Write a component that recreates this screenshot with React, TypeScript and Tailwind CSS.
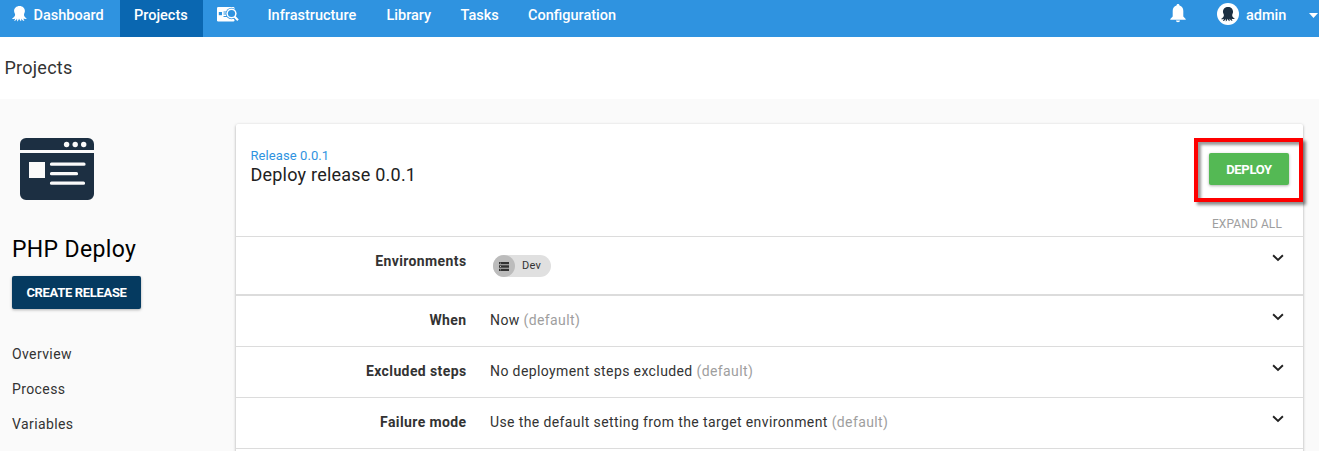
import { ReactNode } from "react";

function Octopus({ className }: { className: string }) {
  return (
    <svg viewBox="0 0 15 16" preserveAspectRatio="none" className={className} fill="currentColor">
      <path d="M7.600 0C4.300 0 2.100 2.200 2.100 5.100c0 1.600.9 2.400 1 3.600.1 1.300-1.300 2.900-3.100 4 .8.400 2.200.3 3.200-.3-.2 1-.7 1.900-1.200 2.600 1.300-.2 2.500-1.200 3-2.600.2 1 .2 2 .1 3 .9-.6 1.700-1.700 1.900-3 .5 1 1 2 2 2.900.4-.8.3-1.900.1-2.900.9 1.300 1.900 2.300 3.300 2.500-.5-.8-.8-1.500-.9-2.400 1 .5 2.300.6 3.400 0-1.900-1-3-2.600-2.900-3.800.1-1.100.9-2 .9-3.600C12.900 2.200 10.700 0 7.600 0Z" />
    </svg>
  );
}

function SearchCard() {
  return (
    <svg viewBox="0 0 22 16" className="h-4 w-[22px] shrink-0">
      <rect x="0" y="1" width="17.500" height="14.500" rx="1.200" fill="#fff" />
      <rect x="1.800" y="6" width="3.200" height="3.200" fill="#2f93e0" />
      <path d="M6.500 6h4M6.500 8h3M6.500 10.500h4" stroke="#2f93e0" strokeWidth="1" />
      <circle cx="14.500" cy="7.500" r="5.800" fill="#2f93e0" />
      <path d="m17.300 10.500 3.500 3.800" stroke="#2f93e0" strokeWidth="4" />
      <circle cx="14.500" cy="7.500" r="5.100" fill="#fff" />
      <circle cx="14.500" cy="7.500" r="3.600" fill="#2f93e0" />
      <path d="m17.500 10.500 3.500 3.800" stroke="#fff" strokeWidth="2" />
    </svg>
  );
}

function Chevron() {
  return (
    <svg viewBox="0 0 12 8" className="h-2 w-3" fill="none" stroke="#212121" strokeWidth="1.900">
      <path d="M1.100 1.200 6 5.900l4.900-4.700" />
    </svg>
  );
}

function ProjectLogo() {
  return (
    <svg viewBox="0 0 74 62" className="ml-2 h-[62px] w-[74px]">
      <path d="M6 0h62a6 6 0 0 1 6 6v6H0V6a6 6 0 0 1 6-6ZM0 15h74v41a6 6 0 0 1-6 6H6a6 6 0 0 1-6-6Z" fill="#1c2f42" />
      <g fill="#fafafa">
        <circle cx="46.600" cy="6.500" r="2.700" />
        <circle cx="55.200" cy="6.500" r="2.700" />
        <circle cx="63.700" cy="6.500" r="2.700" />
        <rect x="9" y="24" width="16" height="16" />
      </g>
      <path d="M31.500 26.200h32.500M31.500 35.700h25M31.500 45.200h32" stroke="#fafafa" strokeWidth="3.200" strokeLinecap="round" />
    </svg>
  );
}

function Row({ label, height, children }: { label: string; height: string; children: ReactNode }) {
  return (
    <div className={`flex shrink-0 border-b border-[#dcdcdc] ${height}`}>
      <div className="w-[230.500px] pt-[14px] text-right text-[14px] leading-5 font-bold tracking-[0.39px] text-[#333]">
        {label}
      </div>
      <div className="ml-[23.500px] flex-1 pt-[14px] text-[14px] leading-5 tracking-[0.39px] text-[#333]">{children}</div>
      <div className="pt-[17px] pr-[19px]">
        <Chevron />
      </div>
    </div>
  );
}

const Default = () => <span className="text-[#9e9e9e]">(default)</span>;

export default function App() {
  return (
    <div className="flex h-[451px] w-[1319px] flex-col overflow-hidden bg-[#fafafa] font-['Roboto',sans-serif] whitespace-nowrap">
      <nav className="flex h-[37px] shrink-0 bg-[#2f93e0] text-[14.500px] leading-[31px] font-medium text-white">
        <div className="flex w-[120px] pl-[11.500px]">
          <Octopus className="mt-[6px] mr-[7px] h-4 w-[15px] shrink-0" />
          Dashboard
        </div>
        <div className="w-[83px] bg-[#0a67b1] pl-[14px]">Projects</div>
        <div className="w-[64px] pt-[6px] pl-[14px]">
          <SearchCard />
        </div>
        <div className="w-[119px] pl-[0.500px]">Infrastructure</div>
        <div className="w-[74px] pl-[0.500px]">Library</div>
        <div className="w-[68px] pl-[0.500px]">Tasks</div>
        <div className="flex-1">Configuration</div>
        <svg viewBox="0 0 16 19" className="mt-1 mr-[31px] h-[19px] w-4" fill="#fff">
          <path d="M8 0c1 0 1.500.6 1.500 1.600C12 2.300 13.300 4.400 13.300 7v5.500L15.700 15v.8H.3V15l2.400-2.500V7c0-2.600 1.300-4.700 3.800-5.400C6.500.6 7 0 8 0ZM6 16.500h4c0 1-.8 1.700-2 1.700s-2-.7-2-1.700Z" />
        </svg>
        <div className="mt-[3px] mr-[7px] flex size-[22px] items-center justify-center rounded-full bg-white text-[#1c2f42]">
          <Octopus className="h-[15px] w-[14px]" />
        </div>
        <div className="w-[63px]">admin</div>
        <svg viewBox="0 0 9 5" className="mt-[13px] h-[5px] w-[9px] shrink-0" fill="#fff">
          <path d="M0 0h9L4.500 5Z" />
        </svg>
        <div className="w-[1px]" />
      </nav>
      <header className="h-[62px] shrink-0 bg-white pt-[19px] pl-[4.500px] text-[18px] leading-6 tracking-[0.25px] text-[#333]">
        Projects
      </header>
      <div className="flex min-h-0 flex-1">
        <aside className="w-[236px] shrink-0 pt-[39px] pl-3">
          <ProjectLogo />
          <h1 className="mt-[35px] text-[23px] leading-[30px] tracking-[0.35px] text-black">PHP Deploy</h1>
          <button className="mt-[11px] block h-[33px] w-[129px] rounded-[2px] bg-[#053a60] text-[13px] font-bold tracking-[-0.33px] text-white shadow-[0_1px_3px_rgba(0,0,0,0.3)]">
            CREATE RELEASE
          </button>
          <div className="mt-[28px] text-[14px] leading-[35px] tracking-[0.39px] text-[#333]">
            <div>Overview</div>
            <div>Process</div>
            <div>Variables</div>
          </div>
        </aside>
        <main className="mt-[25px] flex h-[400px] w-[1067px] flex-col rounded-t-[2px] bg-white shadow-[0_1px_3px_rgba(0,0,0,0.35)]">
          <div className="flex h-[113px] shrink-0 justify-between border-b border-[#dcdcdc]">
            <div className="pt-6 pl-[14.500px]">
              <div className="text-[13px] leading-4 tracking-[0.08px] text-[#2f93e0]">Release 0.0.1</div>
              <h2 className="text-[18px] leading-[22px] tracking-[0.22px] text-[#212121]">Deploy release 0.0.1</h2>
            </div>
            <div className="flex flex-col items-end pt-[14px]">
              <div className="relative z-10 h-16 w-[109px] border-4 border-[#fe0000] pt-[11px] pl-[11px] shadow-[3px_3px_3px_rgba(0,0,0,0.45),inset_3px_3px_3px_rgba(0,0,0,0.4)]">
                <button className="block h-8 w-20 rounded-[2px] bg-[#54b954] pt-px text-[13px] font-bold tracking-[-0.3px] text-white shadow-[0_1px_3px_rgba(0,0,0,0.3)]">
                  DEPLOY
                </button>
              </div>
              <div className="mt-[14px] pr-[21px] text-[12px] leading-4 tracking-[0.1px] text-[#9e9e9e]">EXPAND ALL</div>
            </div>
          </div>
          <Row label="Environments" height="h-[58px]">
            <div className="mt-1 ml-[3px] flex h-[22px] w-[58px] items-center rounded-full bg-[#e0e0e0]">
              <div className="flex size-[22px] items-center justify-center rounded-full bg-[#bcbcbc]">
                <svg viewBox="0 0 10 9" className="h-[9px] w-[10px]" fill="#333">
                  <path d="M0 0h10v2.300H0ZM0 3.300h10v2.400H0ZM0 6.700h10V9H0Z" />
                  <path d="M1 .8h1v.8H1ZM1 4.100h1v.8H1ZM1 7.400h1v.8H1Z" fill="#bcbcbc" />
                </svg>
              </div>
              <span className="ml-[7px] text-[11px] tracking-[0.3px]">Dev</span>
            </div>
          </Row>
          <Row label="When" height="h-[52px] border-t">
            Now <Default />
          </Row>
          <Row label="Excluded steps" height="h-[51px]">
            No deployment steps excluded <Default />
          </Row>
          <Row label="Failure mode" height="h-[51px]">
            Use the default setting from the target environment <Default />
          </Row>
        </main>
      </div>
    </div>
  );
}
